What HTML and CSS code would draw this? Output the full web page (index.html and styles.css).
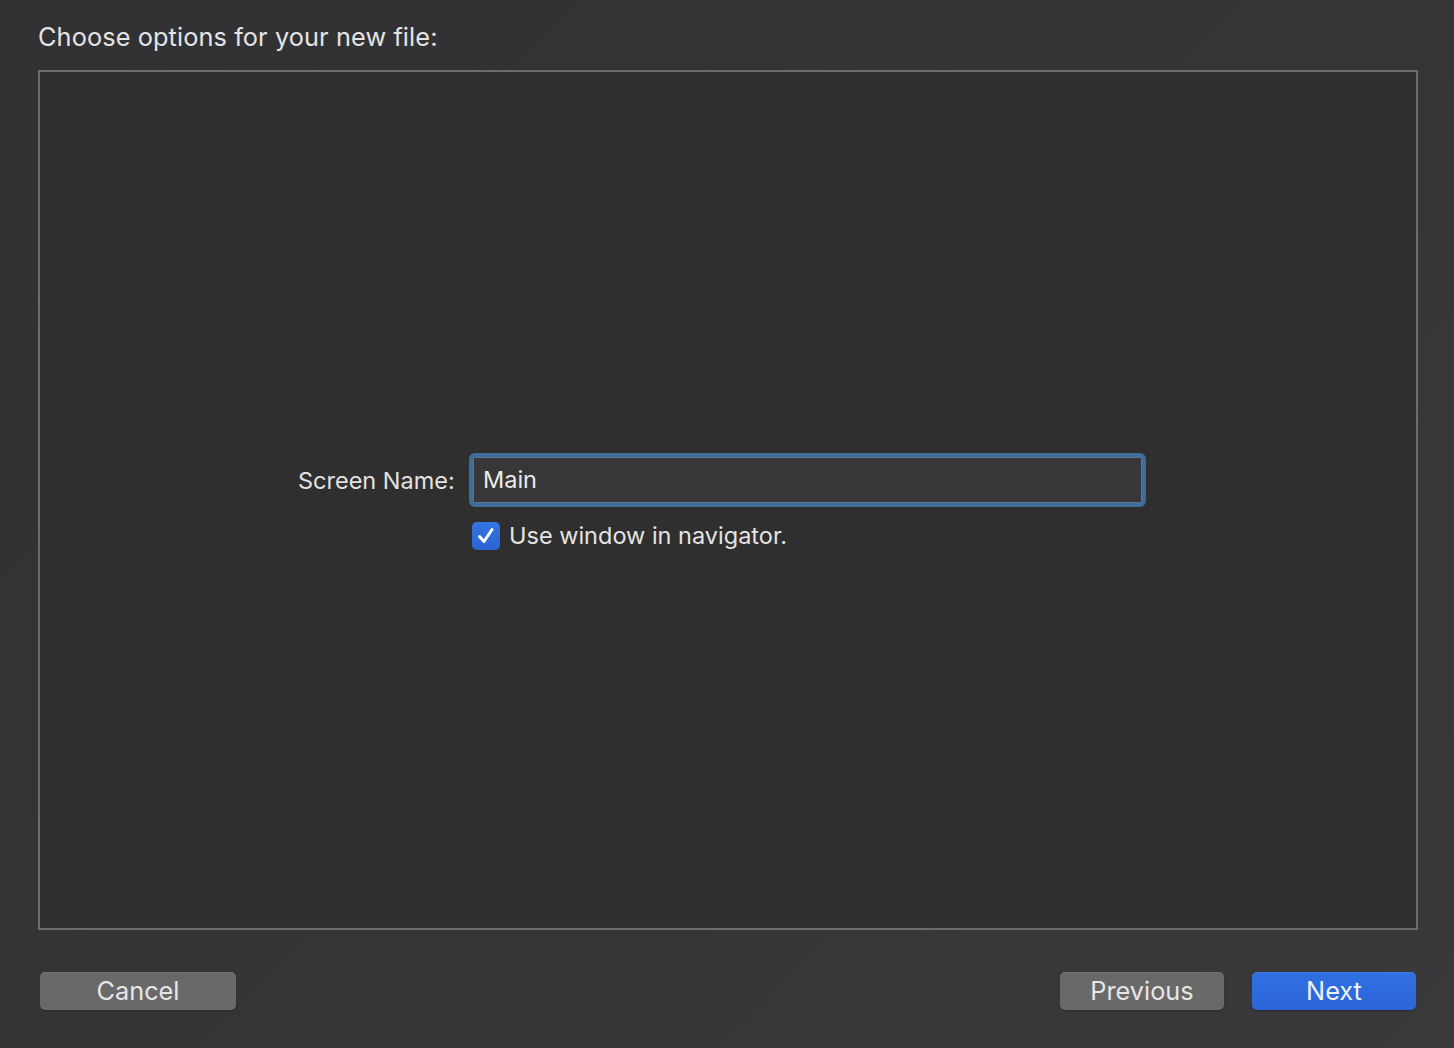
FILE: index.html
```html
<!DOCTYPE html>
<html>
<head>
<meta charset="utf-8">
<link rel="stylesheet" href="styles.css">
</head>
<body>
<div class="sheet">
  <h1 class="title">Choose options for your new file:</h1>
  <div class="panel">
    <div class="form">
      <div class="row">
        <label class="label">Screen Name:</label>
        <div class="field"><span class="field-text">Main</span></div>
      </div>
      <div class="row check-row">
        <span class="label spacer"></span>
        <div class="check">
          <span class="box">
            <svg width="22" height="22" viewBox="0 0 22 22"><path d="M4.5 11.5 L9 16.5 L17 4.5" fill="none" stroke="#fff" stroke-width="3" stroke-linecap="round" stroke-linejoin="round"/></svg>
          </span>
          <span class="check-text">Use window in navigator.</span>
        </div>
      </div>
    </div>
  </div>
  <div class="footer">
    <button class="btn">Cancel</button>
    <div class="right">
      <button class="btn btn-prev">Previous</button>
      <button class="btn btn-primary">Next</button>
    </div>
  </div>
</div>
</body>
</html>
```
FILE: styles.css
```css
html, body {
  margin: 0;
  padding: 0;
  height: 100%;
}
body {
  background: linear-gradient(135deg, #313134 0%, #353538 60%, #39393c 100%);
  font-family: Inter, "Noto Sans", "Liberation Sans", sans-serif;
  color: #e2e2e2;
  overflow: hidden;
}
.sheet {
  display: flex;
  flex-direction: column;
  padding: 0 36px 0 38px;
  height: 1048px;
  box-sizing: border-box;
}
.title {
  margin: 0;
  padding-top: 22px;
  height: 70px;
  flex: 0 0 70px;
  box-sizing: border-box;
  font-size: 25.3px;
  font-weight: 400;
  line-height: 30px;
  color: #e4e4e4;
  letter-spacing: 0.1px;
}
.panel {
  height: 860px;
  flex: 0 0 860px;
  box-sizing: border-box;
  border: 2px solid #6c6c6d;
  background: #2f2f2f;
  display: flex;
  align-items: flex-start;
  justify-content: flex-start;
}
.form {
  margin-top: 381px;
  margin-left: 258px;
  display: flex;
  flex-direction: column;
  gap: 14px;
}
.row {
  display: flex;
  align-items: center;
}
.label {
  width: 158px;
  font-size: 23.5px;
  color: #e2e2e2;
  text-align: left;
  margin-right: 13px;
  white-space: nowrap;
}
.spacer { display: block; }
.field {
  width: 677px;
  height: 54px;
  box-sizing: border-box;
  border: 4px solid #406c9a;
  border-radius: 6px;
  background: #373737;
  box-shadow: inset 0 0 0 1px #5b7594;
  display: flex;
  align-items: center;
  padding-left: 10px;
  padding-bottom: 2px;
}
.field-text {
  font-size: 23.5px;
  color: #ececec;
}
.check-row {
  margin-left: 3px;
}
.check {
  display: flex;
  align-items: center;
  gap: 9px;
}
.box {
  width: 28px;
  height: 28px;
  border-radius: 5px;
  background: linear-gradient(#3474e4, #2c64d2);
  display: flex;
  align-items: center;
  justify-content: center;
}
.box svg { display: block; }
.check-text {
  font-size: 23.5px;
  color: #e4e4e4;
}
.footer {
  margin-top: 42px;
  display: flex;
  justify-content: space-between;
  align-items: center;
  padding-left: 2px;
  padding-right: 2px;
}
.right {
  display: flex;
  gap: 28px;
}
.btn {
  height: 38px;
  width: 196px;
  border: none;
  border-radius: 5px;
  background: #69696a;
  color: #e6e6e6;
  font-family: Inter, "Noto Sans", "Liberation Sans", sans-serif;
  font-size: 25.3px;
  line-height: 38px;
  padding: 0;
  box-shadow: 0 1px 1px rgba(0,0,0,0.25), inset 0 1px 0 rgba(255,255,255,0.06);
}
.btn-prev { width: 164px; }
.btn-primary {
  width: 164px;
  background: linear-gradient(#3170e2, #2b65d9);
  color: #eef2fb;
}
```
